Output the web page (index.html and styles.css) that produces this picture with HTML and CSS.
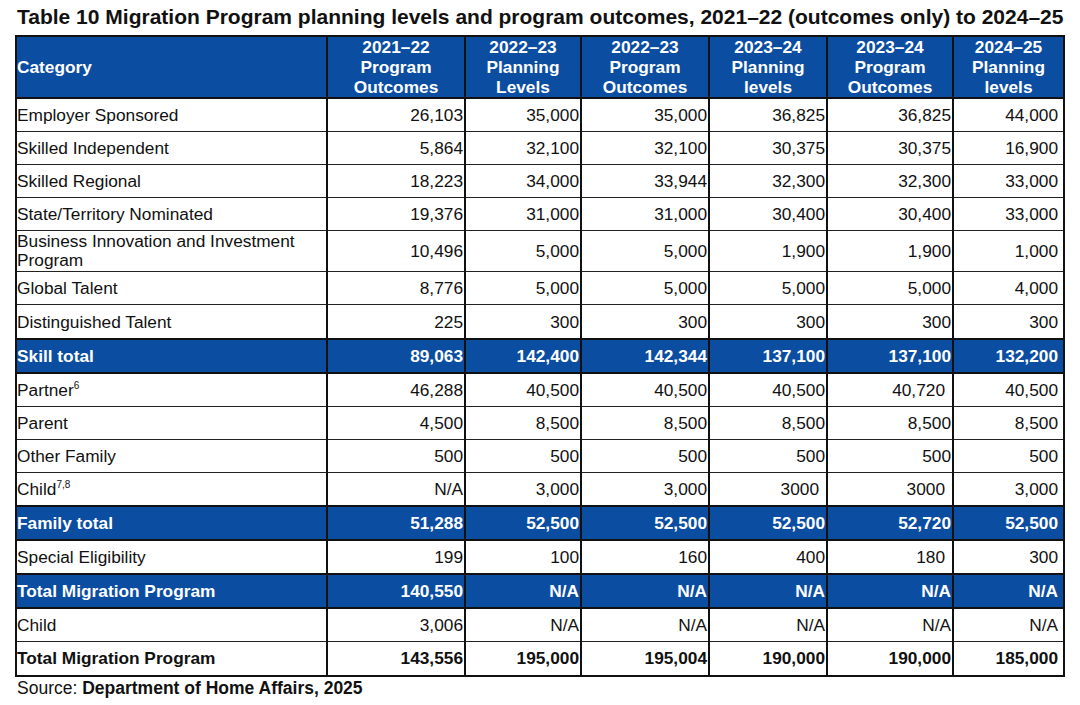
FILE: index.html
```html
<!DOCTYPE html>
<html lang="en">
<head>
<meta charset="utf-8">
<title>Table 10 Migration Program</title>
<link rel="stylesheet" href="styles.css">
</head>
<body>
<div class="page">
  <h1 class="title">Table 10 Migration Program planning levels and program outcomes, 2021–22 (outcomes only) to 2024–25</h1>
  <table class="mig">
    <colgroup>
      <col class="c0"><col class="c1"><col class="c2"><col class="c3"><col class="c4"><col class="c5"><col class="c6">
    </colgroup>
    <thead>
      <tr>
        <th class="cat">Category</th>
        <th>2021–22<br>Program<br>Outcomes</th>
        <th>2022–23<br>Planning<br>Levels</th>
        <th>2022–23<br>Program<br>Outcomes</th>
        <th>2023–24<br>Planning<br>levels</th>
        <th>2023–24<br>Program<br>Outcomes</th>
        <th>2024–25<br>Planning<br>levels</th>
      </tr>
    </thead>
    <tbody>
      <tr><td>Employer Sponsored</td><td>26,103</td><td>35,000</td><td>35,000</td><td>36,825</td><td>36,825</td><td>44,000</td></tr>
      <tr><td>Skilled Independent</td><td>5,864</td><td>32,100</td><td>32,100</td><td>30,375</td><td>30,375</td><td>16,900</td></tr>
      <tr><td>Skilled Regional</td><td>18,223</td><td>34,000</td><td>33,944</td><td>32,300</td><td>32,300</td><td>33,000</td></tr>
      <tr><td>State/Territory Nominated</td><td>19,376</td><td>31,000</td><td>31,000</td><td>30,400</td><td>30,400</td><td>33,000</td></tr>
      <tr class="tall"><td class="wrap">Business Innovation and Investment Program</td><td>10,496</td><td>5,000</td><td>5,000</td><td>1,900</td><td>1,900</td><td>1,000</td></tr>
      <tr><td>Global Talent</td><td>8,776</td><td>5,000</td><td>5,000</td><td>5,000</td><td>5,000</td><td>4,000</td></tr>
      <tr><td>Distinguished Talent</td><td>225</td><td>300</td><td>300</td><td>300</td><td>300</td><td>300</td></tr>
      <tr class="total"><td>Skill total</td><td>89,063</td><td>142,400</td><td>142,344</td><td>137,100</td><td>137,100</td><td>132,200</td></tr>
      <tr><td>Partner<sup>6</sup></td><td>46,288</td><td>40,500</td><td>40,500</td><td>40,500</td><td class="gap">40,720</td><td>40,500</td></tr>
      <tr><td>Parent</td><td>4,500</td><td>8,500</td><td>8,500</td><td>8,500</td><td>8,500</td><td>8,500</td></tr>
      <tr><td>Other Family</td><td>500</td><td>500</td><td>500</td><td>500</td><td>500</td><td>500</td></tr>
      <tr><td>Child<sup>7,8</sup></td><td>N/A</td><td>3,000</td><td>3,000</td><td class="gap">3000</td><td class="gap">3000</td><td>3,000</td></tr>
      <tr class="total"><td>Family total</td><td>51,288</td><td>52,500</td><td>52,500</td><td>52,500</td><td>52,720</td><td>52,500</td></tr>
      <tr><td>Special Eligibility</td><td>199</td><td>100</td><td>160</td><td>400</td><td class="gap">180</td><td>300</td></tr>
      <tr class="total"><td>Total Migration Program</td><td>140,550</td><td>N/A</td><td>N/A</td><td>N/A</td><td>N/A</td><td>N/A</td></tr>
      <tr><td>Child</td><td>3,006</td><td>N/A</td><td>N/A</td><td>N/A</td><td>N/A</td><td>N/A</td></tr>
      <tr class="grand"><td>Total Migration Program</td><td>143,556</td><td>195,000</td><td>195,004</td><td>190,000</td><td>190,000</td><td>185,000</td></tr>
    </tbody>
  </table>
  <p class="source">Source: <b>Department of Home Affairs, 2025</b></p>
</div>
</body>
</html>
```

FILE: styles.css
```css
html, body {
  margin: 0;
  padding: 0;
  background: #ffffff;
}

.page {
  padding: 6px 0 0 15px;
  font-family: "Liberation Sans", Arial, sans-serif;
  color: #111111;
}

.title {
  margin: 0 0 7px 2px;
  font-size: 21px;
  line-height: 22px;
  font-weight: bold;
  white-space: nowrap;
  color: #111111;
}

.mig {
  border-collapse: collapse;
  table-layout: fixed;
  width: 1048px;
  font-size: 17.3px;
  border: 2px solid #111111;
}

.c0 { width: 311px; }
.c1 { width: 138px; }
.c2 { width: 116px; }
.c3 { width: 128px; }
.c4 { width: 118px; }
.c5 { width: 126px; }
.c6 { width: 111px; }

.mig th {
  background: #0a4da1;
  color: #ffffff;
  font-weight: bold;
  line-height: 20px;
  height: 58px;
  padding: 0;
  text-align: center;
  vertical-align: middle;
  border-left: 2px solid #111111;
  border-bottom: 2px solid #111111;
}

.mig th.cat {
  text-align: left;
  padding-left: 0;
}

.mig td {
  height: 32.1px;
  padding: 0 1px 0 0;
  text-align: right;
  vertical-align: middle;
  line-height: 20px;
  white-space: nowrap;
  border-left: 2px solid #111111;
  border-top: 1px solid #222222;
}

.mig td:first-child {
  text-align: left;
  padding-left: 0;
}

.mig td:last-child {
  padding-right: 5px;
}

.mig td.gap {
  padding-right: 7px;
}

.mig td.wrap {
  white-space: normal;
  line-height: 19px;
}

.mig tr.tall td {
  height: 40px;
}

.mig tr.total td {
  background: #0a4da1;
  color: #ffffff;
  font-weight: bold;
  border-top: 2px solid #111111;
}

.mig tr.total + tr td {
  border-top: 2px solid #111111;
}

.mig tr.grand td {
  font-weight: bold;
}

.mig sup {
  font-size: 10px;
  line-height: 0;
  vertical-align: 7px;
}

.source {
  margin: 1px 0 0 2px;
  font-size: 17.5px;
  line-height: 20px;
}

.source b {
  font-weight: bold;
}
```
